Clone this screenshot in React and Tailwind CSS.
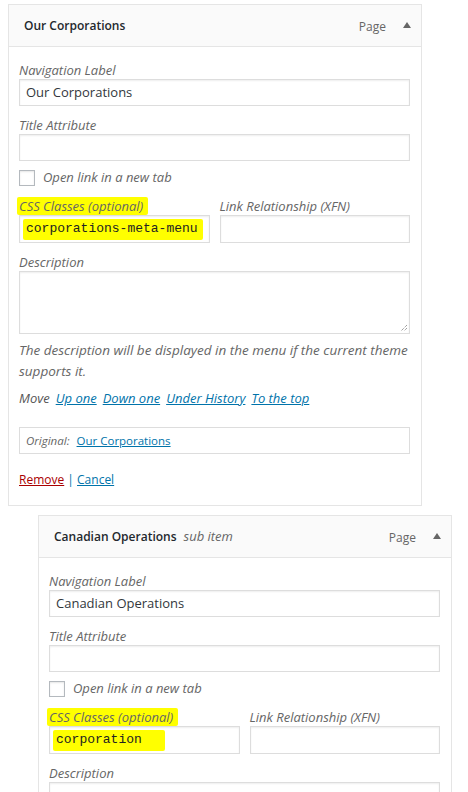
import React from "react";

const FONT = "font-['Open_Sans',sans-serif]";
const MONO = "font-['Liberation_Mono',monospace]";

const Label = ({ children, highlight }) => (
  <div className="h-[18px] leading-[18px] text-[13px] italic text-[#666]">
    {highlight ? (
      <span className="inline-block -ml-[2px] pl-[2px] pr-[5px] bg-[#ffff00] rounded-[2px]">
        {children}
      </span>
    ) : (
      children
    )}
  </div>
);

const TextInput = ({ value, mono, hlWidth, tall }) => (
  <div
    className={`${tall ? "h-[28px]" : "h-[27px]"} border border-[#ddd] bg-white flex items-center shadow-[inset_0_1px_2px_rgba(0,0,0,0.07)]`}
  >
    {mono ? (
      <span
        className={`ml-[3px] h-[21px] flex items-center pl-[3px] bg-[#ffff00] text-[13px] text-[#222] rounded-[2px] ${MONO}`}
        style={{ width: hlWidth }}
      >
        {value}
      </span>
    ) : (
      <span className="pl-[6px] text-[13px] text-[#32373c]">{value}</span>
    )}
  </div>
);

const MenuItemCard = ({ title, subItem, navLabel, cssClass, hlWidth, className }) => (
  <div className={`w-[414px] border border-[#e5e5e5] bg-white ${className}`}>
    {/* HEADER */}
    <div className="h-[42px] bg-[#fafafa] border-b border-[#e5e5e5] flex items-center pl-[15px] pr-[10px]">
      <span className="text-[12px] font-semibold text-[#23282d]">{title}</span>
      {subItem && (
        <span className="ml-[7px] text-[13px] italic text-[#666]">{subItem}</span>
      )}
      <span className="ml-auto text-[12px] text-[#666] mt-[2px]">Page</span>
      <svg width="8" height="6" viewBox="0 0 8 6" className="ml-[17px] mb-[2px]">
        <path d="M0 6 L4 0 L8 6 Z" fill="#666" />
      </svg>
    </div>

    {/* BODY */}
    <div className="pl-[10px] pr-[11px] pt-[14px] pb-[16px]">
      <Label>Navigation Label</Label>
      <TextInput value={navLabel} />

      <div className="mt-[10px]">
        <Label>Title Attribute</Label>
        <TextInput value="" />
      </div>

      <div className="mt-[9px] flex items-center h-[16px]">
        <div className="w-[16px] h-[16px] border border-[#b4b9be] bg-white shadow-[inset_0_1px_2px_rgba(0,0,0,0.1)]" />
        <span className="ml-[8px] text-[13px] italic text-[#666]">Open link in a new tab</span>
      </div>

      <div className="mt-[11px] grid grid-cols-2 gap-[10px]">
        <div>
          <Label highlight>CSS Classes (optional)</Label>
          <TextInput value={cssClass} mono hlWidth={hlWidth} tall />
        </div>
        <div>
          <Label>Link Relationship (XFN)</Label>
          <TextInput value="" tall />
        </div>
      </div>

      <div className="mt-[10px]">
        <Label>Description</Label>
        <div className="relative h-[63px] border border-[#ddd] bg-white shadow-[inset_0_1px_2px_rgba(0,0,0,0.07)]">
          <svg width="8" height="8" viewBox="0 0 8 8" className="absolute right-[1px] bottom-[1px]">
            <path d="M7 1 L1 7 M7 4 L4 7" stroke="#777" strokeWidth="1" strokeDasharray="1 1" />
          </svg>
        </div>
      </div>

      <p className="mt-[6px] -mr-[8px] text-[13.5px] leading-[21px] italic text-[#666]">
        The description will be displayed in the menu if the current theme supports it.
      </p>

      <div className="mt-[6px] h-[21px] leading-[21px] text-[13px] italic flex gap-[6px]">
        <span className="text-[#555]">Move</span>
        <a className="text-[#0073aa] underline">Up one</a>
        <a className="text-[#0073aa] underline">Down one</a>
        <a className="text-[#0073aa] underline">Under History</a>
        <a className="text-[#0073aa] underline">To the top</a>
      </div>

      <div className="mt-[18px] h-[27px] border border-[#ddd] flex items-center pl-[6px] text-[11.5px]">
        <span className="italic text-[#666]">Original:</span>
        <a className="ml-[7px] text-[#0073aa] underline">{title}</a>
      </div>

      <div className="mt-[17px] h-[18px] leading-[18px] text-[12px]">
        <a className="text-[#a00] underline">Remove</a>
        <span className="text-[#0073aa]"> | </span>
        <a className="text-[#0073aa] underline">Cancel</a>
      </div>
    </div>
  </div>
);

export default function App() {
  return (
    <div className={`bg-white min-h-[792px] pt-[4px] pl-[8px] ${FONT}`}>
      <MenuItemCard
        title="Our Corporations"
        navLabel="Our Corporations"
        cssClass="corporations-meta-menu"
        hlWidth={180}
      />
      <MenuItemCard
        className="ml-[30px] mt-[9px]"
        title="Canadian Operations"
        subItem="sub item"
        navLabel="Canadian Operations"
        cssClass="corporation"
        hlWidth={112}
      />
    </div>
  );
}
